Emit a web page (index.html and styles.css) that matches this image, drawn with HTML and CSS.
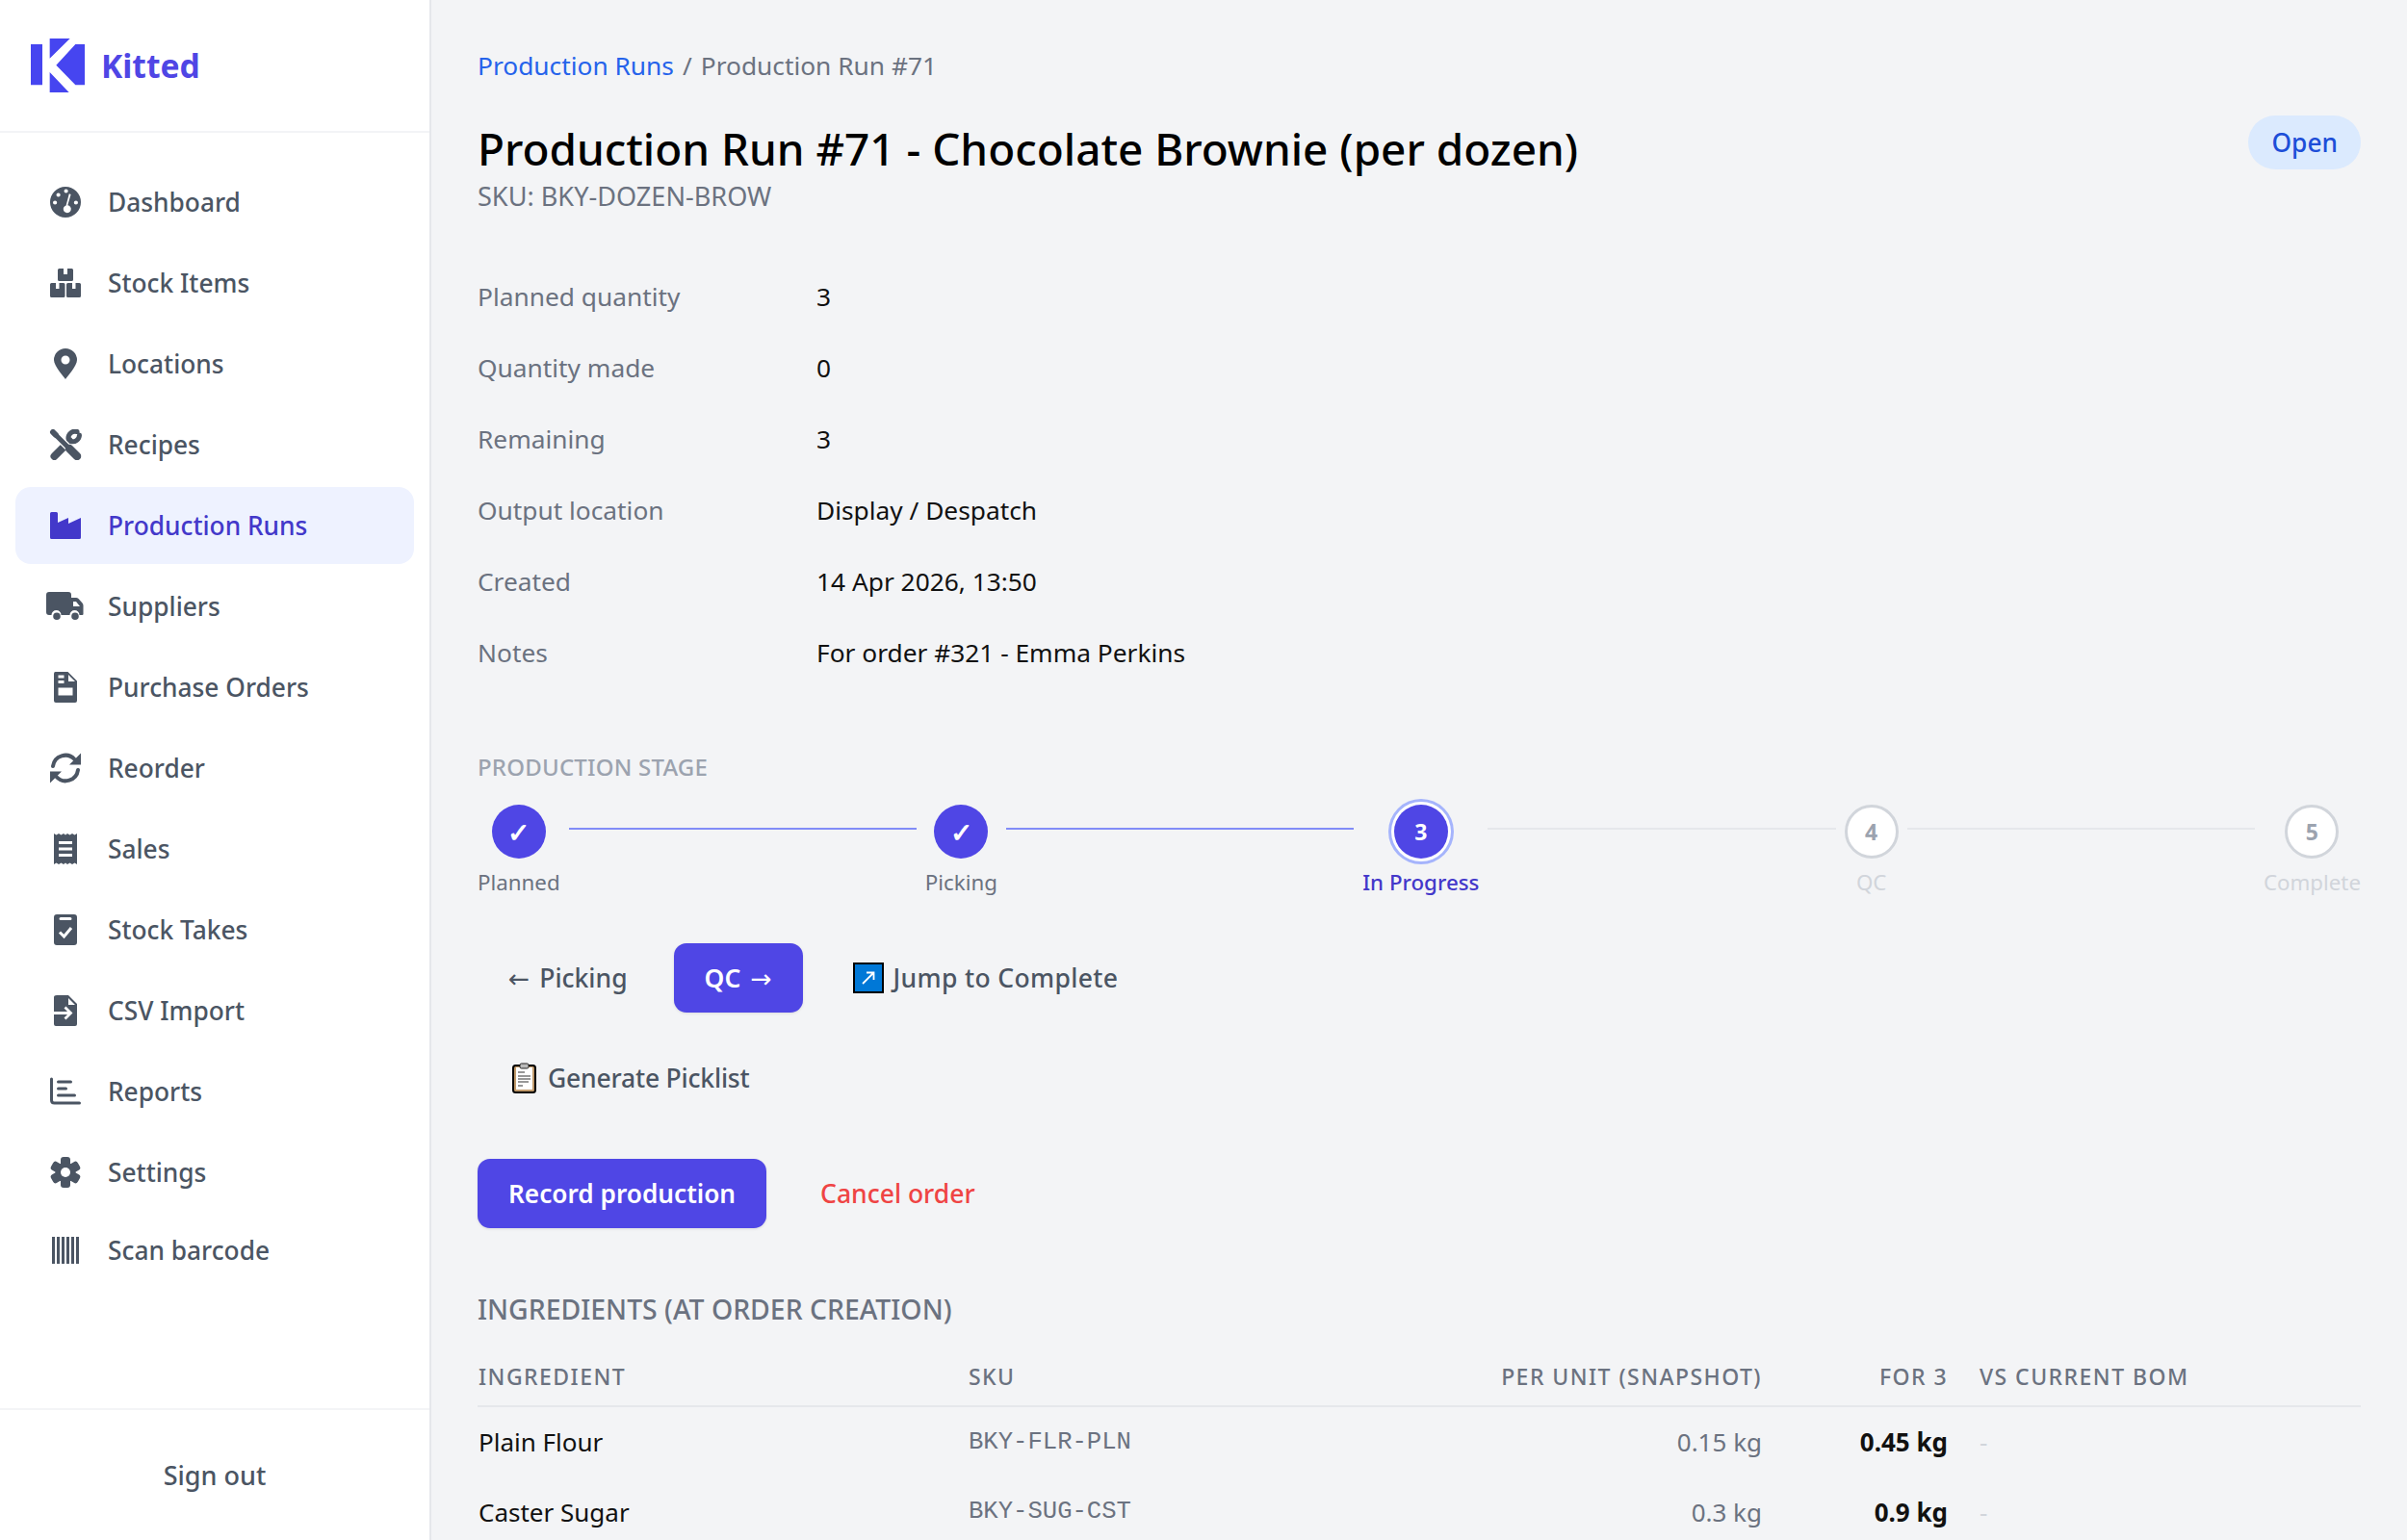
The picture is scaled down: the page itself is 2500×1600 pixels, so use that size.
FILE: index.html
```html
<!DOCTYPE html>
<html lang="en">
<head>
    <meta charset="UTF-8">
    <meta name="viewport" content="width=device-width, initial-scale=1.0">
    <title>Production Run #71 - Kitted</title>
    <link rel="stylesheet" href="styles.css">
</head>
<body>
    <aside class="sidebar">
        <div class="brand">
            <svg class="brand-mark" viewBox="96 60 168 168">
                <path d="M96 78h36v127H96zM155 60h63l-63 62zM235 78h29v127h-29l-60-62zM155 165l60 63h-60z"/>
            </svg>
            <span class="brand-name">Kitted</span>
        </div>

        <nav class="nav">
            <a class="nav-item">
                <svg class="nav-icon" viewBox="0 0 32 32"><path fill-rule="evenodd" d="M16 0a16 16 0 1 0 0 32a16 16 0 1 0 0-32zM14.500 4.500a2.100 2.100 0 1 0 4.200 0a2.100 2.100 0 1 0-4.200 0zM6.500 8.500a2.100 2.100 0 1 0 4.200 0a2.100 2.100 0 1 0-4.200 0zM3 16.500a2.100 2.100 0 1 0 4.200 0a2.100 2.100 0 1 0-4.200 0zM24.800 16.500a2.100 2.100 0 1 0 4.200 0a2.100 2.100 0 1 0-4.200 0zM19.800 7.300l1.800.6-3.300 11.300a4 4 0 1 1-4 2 4 4 0 0 1 2.300-1.800z"/></svg>
                Dashboard
            </a>
            <a class="nav-item">
                <svg class="nav-icon" viewBox="0 0 32 32"><path d="M9.500 1H14v6h4V1h4.500Q24 1 24 2.500v10q0 1.500-1.500 1.500h-13Q8 14 8 12.500v-10Q8 1 9.500 1zM1.500 16H6v6h3.500v-6h4.500q1.500 0 1.500 1.500v12q0 1.500-1.500 1.500H1.500Q0 31 0 29.500v-12Q0 16 1.500 16zM18.500 16H23v6h3.500v-6h4q1.500 0 1.500 1.500v12q0 1.500-1.500 1.500h-12q-1.500 0-1.500-1.500v-12q0-1.500 1.500-1.500z"/></svg>
                Stock Items
            </a>
            <a class="nav-item">
                <svg class="nav-icon" viewBox="0 0 32 32"><path fill-rule="evenodd" d="M16 32C14 29 4 18 4 12a12 12 0 0 1 24 0c0 6-10 17-12 20zM16 7.500a4.500 4.500 0 1 0 0 9a4.500 4.500 0 1 0 0-9z"/></svg>
                Locations
            </a>
            <a class="nav-item">
                <svg class="nav-icon" viewBox="0 0 32 32">
                    <path class="tool" d="M4.500 28l10-10" stroke-width="8"/>
                    <path class="tool" d="M14 18l7-7" stroke-width="5"/>
                    <path class="tool" d="M28 2.500A7 7 0 0 0 19 10M21.500 12.500A7 7 0 0 0 30.500 6" stroke-width="5" stroke-linecap="butt"/>
                    <path class="tool tool-gap" d="M7 7l19 19" stroke-width="7.500" stroke-linecap="butt"/>
                    <path class="tool" d="M3 3l3 3" stroke-width="6"/>
                    <path class="tool" d="M4 4l14 14" stroke-width="5" stroke-linecap="butt"/>
                    <path class="tool" d="M20 20l8 8" stroke-width="8.500"/>
                </svg>
                Recipes
            </a>
            <a class="nav-item active">
                <svg class="nav-icon" viewBox="0 0 32 32"><path d="M0 3.500Q0 2 1.500 2h5Q8 2 8 3.500V13l11-5v6l13-6v20.500q0 1.500-1.500 1.500h-29Q0 30 0 28.500z"/></svg>
                Production Runs
            </a>
            <a class="nav-item">
                <svg class="nav-icon nav-icon-wide" viewBox="0 0 40 32"><path fill-rule="evenodd" d="M3 1h20q3 0 3 3v3h5q1.500 0 2.500 1l4 4.500q1 1 1 2.500v9q0 1-1 1h-3a5 5 0 0 0-10 0h-9a5 5 0 0 0-10 0H3q-3 0-3-3V4q0-3 3-3zM28 11v5h7l-4-5zM11 22.500a3.800 3.800 0 1 0 0 7.600a3.800 3.800 0 1 0 0-7.600zM30 22.500a3.800 3.800 0 1 0 0 7.600a3.800 3.800 0 1 0 0-7.600z"/></svg>
                Suppliers
            </a>
            <a class="nav-item">
                <svg class="nav-icon" viewBox="0 0 32 32"><path fill-rule="evenodd" d="M5.500 0H18.500L28 9.500V30q0 2-2 2H6q-2 0-2-2V2q0-2 1.500-2zM8.500 3.500v3h6v-3zM8.500 9v3h6V9zM19 3v7h7zM8.500 16.500v8h15v-8z"/></svg>
                Purchase Orders
            </a>
            <a class="nav-item">
                <svg class="nav-icon" viewBox="0 0 32 32">
                    <path class="tool" d="M3 14A13 13 0 0 1 25.500 7" stroke-width="4" stroke-linecap="butt"/>
                    <path class="tool" d="M29 18A13 13 0 0 1 6.500 25" stroke-width="4" stroke-linecap="butt"/>
                    <path d="M32 0.500V12.500H20zM0 31.500V19.500H12z"/>
                </svg>
                Reorder
            </a>
            <a class="nav-item">
                <svg class="nav-icon" viewBox="0 0 32 32"><path fill-rule="evenodd" d="M4 0l2.500 1.500L9 0l2.500 1.500L14 0l2 1.500L18 0l2.500 1.500L23 0l2.500 1.500L28 0v32l-2.500-1.500L23 32l-2.500-1.500L18 32l-2-1.500L14 32l-2.500-1.500L9 32l-2.500-1.500L4 32zM9 8v3h14V8zM9 14.500v3h14v-3zM9 21v3h14v-3z"/></svg>
                Sales
            </a>
            <a class="nav-item">
                <svg class="nav-icon" viewBox="0 0 32 32">
                    <path fill-rule="evenodd" d="M7 0h18q3 0 3 3v26q0 3-3 3H7q-3 0-3-3V3q0-3 3-3zM11 3q-1.500 0-1.500 1.500T11 6h10q1.500 0 1.500-1.500T21 3z"/>
                    <path class="cut" d="M10 18.500l4.500 4.500 7.500-9" stroke-width="3"/>
                </svg>
                Stock Takes
            </a>
            <a class="nav-item">
                <svg class="nav-icon" viewBox="0 0 32 32">
                    <path fill-rule="evenodd" d="M7 0h12l9 9v21q0 2-2 2H6q-2 0-2-2V2q0-2 3-2zM19 3v7h7z"/>
                    <path class="cut" d="M3 18.500h18M15.500 12.500l6 6-6 6" stroke-width="2.800"/>
                </svg>
                CSV Import
            </a>
            <a class="nav-item">
                <svg class="nav-icon" viewBox="0 0 32 32">
                    <path class="tool" d="M1.500 3v22q0 3 3 3h26" stroke-width="3"/>
                    <path class="tool" d="M8.500 6h13M8.500 13h8M8.500 20h17" stroke-width="3"/>
                </svg>
                Reports
            </a>
            <a class="nav-item">
                <svg class="nav-icon" viewBox="0 0 32 32">
                    <g class="cog">
                        <rect x="11" y="0" width="10" height="32" rx="3"/>
                        <rect x="11" y="0" width="10" height="32" rx="3" transform="rotate(60 16 16)"/>
                        <rect x="11" y="0" width="10" height="32" rx="3" transform="rotate(120 16 16)"/>
                        <circle cx="16" cy="16" r="10.500"/>
                    </g>
                    <circle class="cog-hole" cx="16" cy="16" r="5"/>
                </svg>
                Settings
            </a>
            <a class="nav-item nav-scan">
                <svg class="nav-icon" viewBox="0 0 32 32"><path d="M2 2h3v28H2zM7 2h3v28H7zM12 2h3v28h-3zM17 2h3v28h-3zM22 2h3v28h-3zM27 2h3v28h-3z"/></svg>
                Scan barcode
            </a>
        </nav>

        <div class="sidebar-footer">Sign out</div>
    </aside>

    <main class="main">
        <div class="crumbs"><a class="crumb-link">Production Runs</a><span class="crumb-sep">/</span>Production Run #71</div>

        <div class="run-head">
            <div>
                <h1 class="run-title">Production Run #71 - Chocolate Brownie (per dozen)</h1>
                <div class="run-sku">SKU: BKY-DOZEN-BROW</div>
            </div>
            <span class="badge">Open</span>
        </div>

        <dl class="details">
            <dt>Planned quantity</dt><dd>3</dd>
            <dt>Quantity made</dt><dd>0</dd>
            <dt>Remaining</dt><dd>3</dd>
            <dt>Output location</dt><dd>Display / Despatch</dd>
            <dt>Created</dt><dd>14 Apr 2026, 13:50</dd>
            <dt>Notes</dt><dd>For order #321 - Emma Perkins</dd>
        </dl>

        <div class="stage-title">PRODUCTION STAGE</div>
        <div class="stepper">
            <div class="step done"><span class="dot">✓</span><span class="step-label">Planned</span></div>
            <div class="step-line done"></div>
            <div class="step done"><span class="dot">✓</span><span class="step-label">Picking</span></div>
            <div class="step-line done"></div>
            <div class="step current"><span class="dot">3</span><span class="step-label">In Progress</span></div>
            <div class="step-line"></div>
            <div class="step"><span class="dot">4</span><span class="step-label">QC</span></div>
            <div class="step-line"></div>
            <div class="step"><span class="dot">5</span><span class="step-label">Complete</span></div>
        </div>

        <div class="actions">
            <button class="btn btn-ghost"><span class="arrow">←</span> Picking</button>
            <button class="btn btn-primary btn-qc">QC <span class="arrow">→</span></button>
            <button class="btn btn-ghost btn-jump">
                <svg class="emoji" viewBox="0 0 32 32">
                    <rect x="1" y="1" width="30" height="30" fill="#0078d7" stroke="#000" stroke-width="2"/>
                    <path d="M10 22L21 11M14 10.500h7.500V18" fill="none" stroke="#fff" stroke-width="1.800"/>
                </svg>
                Jump to Complete
            </button>
        </div>

        <div class="actions actions-picklist">
            <button class="btn btn-ghost btn-picklist">
                <svg class="emoji emoji-clip" viewBox="0 0 25 32">
                    <rect x="1" y="3" width="23" height="28" rx="2.500" fill="#c19a6b" stroke="#000" stroke-width="2"/>
                    <rect x="4" y="5" width="17" height="23" fill="#fff"/>
                    <rect x="8" y="1" width="9" height="5" rx="1.500" fill="#bbb" stroke="#222"/>
                    <path d="M6 10h7M6 14h13M6 17h13M6 20h11M6 24h5" stroke="#333" stroke-width="1.200"/>
                </svg>
                Generate Picklist
            </button>
        </div>

        <div class="actions actions-record">
            <button class="btn btn-primary btn-record">Record production</button>
            <button class="btn btn-danger">Cancel order</button>
        </div>

        <h2 class="ingredients-title">INGREDIENTS (AT ORDER CREATION)</h2>
        <table class="ingredients">
            <colgroup>
                <col class="col-name"><col class="col-sku"><col class="col-per"><col class="col-for"><col class="col-vs">
            </colgroup>
            <thead>
                <tr>
                    <th>Ingredient</th>
                    <th>SKU</th>
                    <th class="num">Per unit (snapshot)</th>
                    <th class="num">For 3</th>
                    <th class="vs">vs current BOM</th>
                </tr>
            </thead>
            <tbody>
                <tr>
                    <td>Plain Flour</td>
                    <td class="sku">BKY-FLR-PLN</td>
                    <td class="num muted">0.15 kg</td>
                    <td class="num strong">0.45 kg</td>
                    <td class="vs dash">-</td>
                </tr>
                <tr>
                    <td>Caster Sugar</td>
                    <td class="sku">BKY-SUG-CST</td>
                    <td class="num muted">0.3 kg</td>
                    <td class="num strong">0.9 kg</td>
                    <td class="vs dash">-</td>
                </tr>
            </tbody>
        </table>
    </main>
</body>
</html>
```

FILE: styles.css
```css
* {
    box-sizing: border-box;
}

body {
    display: flex;
    height: 100vh;
    margin: 0;
    overflow: hidden;
    background: #f3f4f6;
    color: #111;
    font-family: "Noto Sans", sans-serif;
    font-size: 26.3px;
}

/* Sidebar */
.sidebar {
    display: flex;
    flex-direction: column;
    flex: 0 0 448px;
    background: #fff;
    border-right: 2px solid #e5e7eb;
}

.brand {
    display: flex;
    align-items: center;
    gap: 17px;
    height: 138px;
    padding-left: 32px;
    border-bottom: 2px solid #f3f4f6;
}

.brand-mark {
    width: 56px;
    height: 56px;
    fill: #4645f0;
}

.brand-name {
    color: #4f46e5;
    font-size: 33.6px;
    font-weight: 700;
}

.nav {
    flex: 1;
    padding: 32px 16px 0;
}

.nav-item {
    display: flex;
    align-items: center;
    gap: 24px;
    height: 80px;
    margin-bottom: 4px;
    padding-left: 32px;
    border-radius: 16px;
    color: #4b5563;
    font-size: 26.3px;
    font-weight: 500;
}

.nav-item.active {
    background: #eef2ff;
    color: #4338ca;
}

.nav-scan {
    height: 74px;
}

.nav-icon {
    flex: 0 0 40px;
    width: 40px;
    height: 32px;
    fill: currentColor;
}

.nav-icon-wide {
    height: 32px;
}

.tool {
    fill: none;
    stroke: currentColor;
    stroke-linecap: round;
}

.tool-gap {
    stroke: #fff;
}

.cut {
    fill: none;
    stroke: #fff;
}

.cog-hole {
    fill: #fff;
}

.sidebar-footer {
    height: 137px;
    border-top: 2px solid #f3f4f6;
    color: #4b5563;
    font-size: 27px;
    font-weight: 500;
    line-height: 135px;
    text-align: center;
}

/* Main */
.main {
    flex: 1;
    min-width: 0;
    padding: 48px 48px 0;
}

.crumbs {
    color: #6b7280;
    line-height: 40px;
}

.crumb-link {
    color: #2563eb;
}

.crumb-sep {
    margin: 0 9px;
}

.run-head {
    display: flex;
    justify-content: space-between;
    align-items: flex-start;
    margin-top: 31px;
}

.run-title {
    margin: 0;
    color: #000;
    font-size: 45.9px;
    font-weight: 500;
    line-height: 70px;
}

.run-sku {
    margin-top: -3px;
    color: #6b7280;
    font-size: 27.1px;
    line-height: 36px;
}

.badge {
    margin-top: 1px;
    padding: 0 24px;
    border-radius: 28px;
    background: #dbeafe;
    color: #1d4ed8;
    font-weight: 500;
    line-height: 56px;
}

.details {
    display: grid;
    grid-template-columns: 352px 1fr;
    grid-auto-rows: 74px;
    align-items: center;
    margin: 49px 0 0;
}

.details dt {
    color: #6b7280;
}

.details dd {
    margin: 0;
}

.stage-title {
    margin-top: 64px;
    color: #9ca3af;
    font-size: 24px;
    font-weight: 500;
    letter-spacing: 0.2px;
    line-height: 36px;
}

.stepper {
    display: flex;
    margin-top: 21px;
}

.step {
    display: flex;
    flex-direction: column;
    align-items: center;
    gap: 7px;
}

.dot {
    display: flex;
    align-items: center;
    justify-content: center;
    width: 56px;
    height: 56px;
    border: 3px solid #d1d5db;
    border-radius: 50%;
    background: #fff;
    color: #9ca3af;
    font-size: 23px;
    font-weight: 700;
}

.step-label {
    color: #d1d5db;
    font-size: 22.3px;
    line-height: 36px;
}

.step.done .dot, .step.current .dot {
    border: none;
    background: #4f46e5;
    color: #fff;
}

.step.done .dot {
    font-size: 28px;
}

.step.current .dot {
    box-shadow: 0 0 0 3px #fff, 0 0 0 6px #a5b4fc;
}

.step.done .step-label {
    color: #6b7280;
}

.step.current .step-label {
    color: #4338ca;
    font-weight: 500;
}

.step-line {
    flex: 1;
    height: 2px;
    margin: 24px 9px 0;
    background: #e5e7eb;
}

.step-line.done {
    background: #818cf8;
}

.actions {
    display: flex;
    align-items: center;
    gap: 16px;
    margin-top: 45px;
}

.actions-picklist {
    margin-top: 32px;
}

.actions-record {
    margin-top: 48px;
    gap: 32px;
}

.btn {
    display: flex;
    align-items: center;
    gap: 10px;
    height: 72px;
    padding: 0 32px;
    border: none;
    border-radius: 13px;
    background: none;
    font-family: inherit;
    font-size: 26.5px;
    font-weight: 500;
    white-space: nowrap;
}

.btn-ghost {
    color: #4b5563;
}

.btn-jump {
    letter-spacing: 0.35px;
}

.btn-picklist {
    letter-spacing: -0.2px;
}

.btn-primary {
    background: #4f46e5;
    color: #fff;
    font-weight: 600;
    box-shadow: 0 1px 3px rgba(0, 0, 0, 0.1);
}

.btn-record {
    font-size: 26.2px;
}

.btn-danger {
    padding: 0 24px;
    color: #ef4444;
}

.arrow {
    font-family: "DejaVu Sans", sans-serif;
    font-weight: 400;
}

.emoji {
    width: 32px;
    height: 32px;
    margin-left: 4px;
}

.emoji-clip {
    width: 25px;
    margin-right: 2px;
}

.ingredients-title {
    margin: 64px 0 0;
    color: #6b7280;
    font-size: 28.4px;
    font-weight: 500;
    line-height: 40px;
}

.ingredients {
    width: 100%;
    margin-top: 19px;
    border-collapse: collapse;
    table-layout: fixed;
}

.col-name { width: 509px; }
.col-sku { width: 541px; }
.col-per { width: 300px; }
.col-for { width: 193px; }
.col-vs { width: 413px; }

.ingredients th, .ingredients td {
    padding: 0 16px 0 1px;
    text-align: left;
}

.ingredients th {
    height: 62px;
    border-bottom: 2px solid #e5e7eb;
    color: #6b7280;
    font-size: 23px;
    font-weight: 500;
    letter-spacing: 1.45px;
    text-transform: uppercase;
}

.ingredients td {
    height: 73px;
    font-size: 26px;
}

.ingredients .num {
    text-align: right;
}

.ingredients .vs {
    padding-left: 17px;
}

.ingredients .sku {
    color: #6b7280;
    font-family: "Liberation Mono", monospace;
    font-size: 25.6px;
}

.muted {
    color: #6b7280;
}

.strong {
    font-weight: 700;
}

.dash {
    color: #d1d5db;
}
```
